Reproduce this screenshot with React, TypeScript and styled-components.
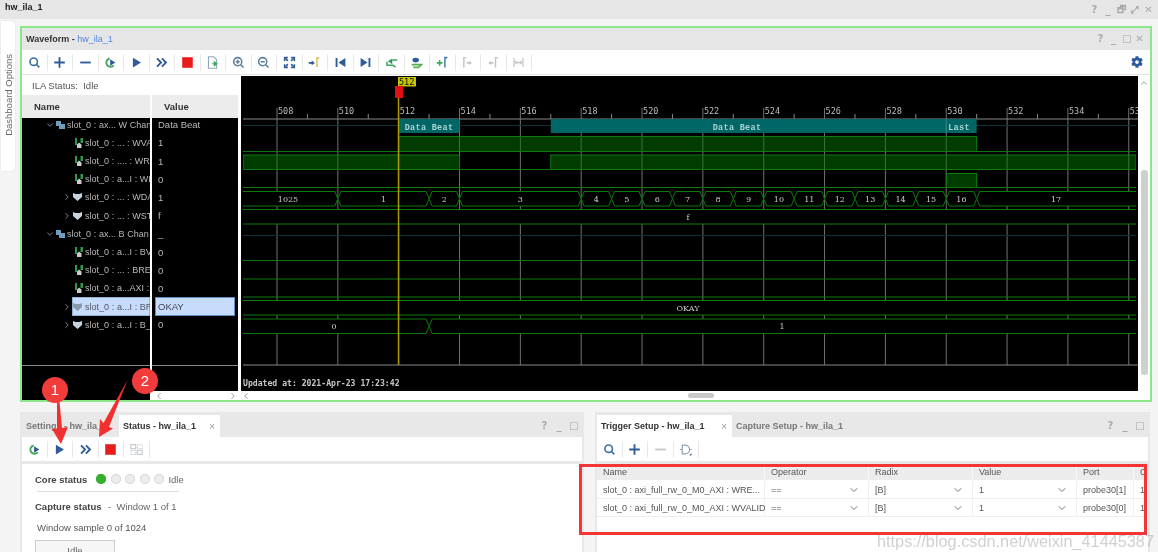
import React from 'react';
import styled, {createGlobalStyle} from 'styled-components';
import {FaCog} from 'react-icons/fa';
import {ChevronDown, ChevronLeft, ChevronRight, ChevronUp} from 'lucide-react';

const GlobalStyle = createGlobalStyle`
  html, body {
    margin: 0;
    padding: 0;
    background: #fff;
    font-family: "Liberation Sans", Arial, sans-serif;
    color: #444;
  }
`;

/* ---------- toolbar icons ---------- */

const BLUE = '#2f5c96';
const GREY = '#c4c8cc';

type IconName =
    'search' | 'plus' | 'minus' | 'refresh' | 'play' | 'fast' | 'stop' | 'export' | 'zoomIn' | 'zoomOut' | 'fit'
    | 'cursor' | 'first' | 'last' | 'addGreen' | 'addBlue' | 'addMark' | 'markNext' | 'markPrev' | 'span' | 'table'
    | 'minusOff' | 'gate';

const icons: Record<IconName, React.ReactNode> = {
    search: <g fill="none" stroke="#3d6fa5" strokeWidth="2"><circle cx="7" cy="7" r="4.6"/><path d="M10.500 10.500l3.500 3.500"/></g>,
    plus: <path d="M8 1.500v13M1.500 8h13" stroke={BLUE} strokeWidth="2.300"/>,
    minus: <path d="M1.500 8h13" stroke={BLUE} strokeWidth="2.300"/>,
    minusOff: <path d="M1.500 8h13" stroke={GREY} strokeWidth="2.300"/>,
    refresh: <g><path d="M12 11.500A5.200 5.200 0 1 1 7 3" fill="none" stroke="#4aa85a" strokeWidth="2.400"/><path d="M7.500 4l6.500 4-6.500 4z" fill={BLUE}/></g>,
    play: <path d="M3.500 2l10 6-10 6z" fill={BLUE}/>,
    fast: <path d="M2.500 3l5 5-5 5M8.500 3l5 5-5 5" fill="none" stroke={BLUE} strokeWidth="2.300"/>,
    stop: <rect x="1.500" y="1.500" width="13" height="13" fill="#e81c1c"/>,
    export: <g><path d="M3 1h6.500l3.500 3.500V15H3z" fill="#fff" stroke="#8fa6bd" strokeWidth="1.300"/><path d="M7 9.500h5M10 6.500l4 3-4 3z" stroke="#3ba55a" fill="#3ba55a"/></g>,
    zoomIn: <g fill="none" stroke="#5c7f9e" strokeWidth="1.900"><circle cx="7" cy="7" r="5"/><path d="M10.800 10.800l3.400 3.400M4.500 7h5M7 4.500v5"/></g>,
    zoomOut: <g fill="none" stroke="#5c7f9e" strokeWidth="1.900"><circle cx="7" cy="7" r="5"/><path d="M10.800 10.800l3.400 3.400M4.500 7h5"/></g>,
    fit: <g fill="none" stroke={BLUE} strokeWidth="1.900"><path d="M2 6V2h4M10 2h4v4M14 10v4h-4M6 14H2v-4"/><path d="M3 3l3 3M13 3l-3 3M13 13l-3-3M3 13l3-3"/></g>,
    cursor: <g><path d="M1 8.500h5" stroke={BLUE} strokeWidth="2.300"/><path d="M4.500 5.500l4 3-4 3z" fill={BLUE}/><path d="M14 2.500h-3v11" fill="none" stroke="#dcc25a" strokeWidth="1.900"/></g>,
    first: <g fill={BLUE}><rect x="2" y="2.500" width="2.300" height="11"/><path d="M14 2.500v11L5.500 8z"/></g>,
    last: <g fill={BLUE}><rect x="11.700" y="2.500" width="2.300" height="11"/><path d="M2 2.500v11L10.500 8z"/></g>,
    addGreen: <g><path d="M9 3L3.500 6.500 9 10z" fill="#2f9a57"/><path d="M2.500 7v4.500h7l3.500 2M9 5h6" fill="none" stroke="#3aa860" strokeWidth="1.900"/></g>,
    addBlue: <g><ellipse cx="7" cy="5" rx="4" ry="3" fill={BLUE}/><path d="M2 10.500h12l-3.500 3.500H4" fill="none" stroke="#55b04c" strokeWidth="2.200"/></g>,
    addMark: <g><path d="M1 8.500h7M4.500 5v7" stroke="#3aa860" strokeWidth="2"/><path d="M14 2h-3v12" fill="none" stroke="#4a80b4" strokeWidth="1.900"/></g>,
    markNext: <g><path d="M6.500 2h-3v12" fill="none" stroke="#c0c4c8" strokeWidth="1.800"/><path d="M7 8.500h4" stroke="#c0c4c8" strokeWidth="2"/><path d="M10 6l3.500 2.500-3.500 2.500z" fill="#c0c4c8"/></g>,
    markPrev: <g><path d="M13.500 2h-3v12" fill="none" stroke="#c0c4c8" strokeWidth="1.800"/><path d="M4 8.500h4" stroke="#c0c4c8" strokeWidth="2"/><path d="M5 6L1.500 8.500 5 11z" fill="#c0c4c8"/></g>,
    span: <g fill="none" stroke="#c6cacd" strokeWidth="1.600"><path d="M2.500 2.500v11M13.500 2.500v11M4 8h8M6 6L4 8l2 2M10 6l2 2-2 2"/></g>,
    table: <g fill="none" stroke="#c6cacd" strokeWidth="1.400"><rect x="1" y="2" width="6" height="5"/><rect x="9" y="9" width="6" height="5"/><rect x="1" y="9" width="6" height="5" strokeDasharray="1 1"/><rect x="9" y="2" width="6" height="5" strokeDasharray="1 1"/></g>,
    gate: <g fill="none" stroke="#8ea3b8" strokeWidth="1.500"><path d="M4 2.500h3.500a5.500 5.500 0 0 1 0 11H4zM1 8h3M13 8h2.500"/><path d="M13 15l2-2v2z" fill="#556" stroke="#556" strokeWidth=".5"/></g>,
};

const ToolIcon: React.FC<{name: IconName}> = ({name}) => (
    <svg width="13" height="13" viewBox="0 0 16 16">{icons[name]}</svg>
);

/* ---------- waveform chart ---------- */

const tx = (n: number) => 277 + (n - 508) * 30.42;
const LEFT = 243;
const RIGHT = 1136;
const LINE = '#0c7a0c';
const ticks = Array.from({length: 15}, (_, i) => 508 + i * 2);
const minors = Array.from({length: 15}, (_, i) => 509 + i * 2);

const busValues: [string, number, number, number?][] = [
    ['1025', 506, 510, 288], ['1', 510, 513], ['2', 513, 514], ['3', 514, 518], ['4', 518, 519], ['5', 519, 520],
    ['6', 520, 521], ['7', 521, 522], ['8', 522, 523], ['9', 523, 524], ['10', 524, 525], ['11', 525, 526],
    ['12', 526, 527], ['13', 527, 528], ['14', 528, 529], ['15', 529, 530], ['16', 530, 531], ['17', 531, 540, 1056],
];

const Digital: React.FC<{hi: number; lo: number; highs?: [number, number][]}> = ({hi, lo, highs = []}) => (
    <g>
        <path d={`M${LEFT} ${lo}H${RIGHT}`} stroke={LINE} fill="none"/>
        {highs.map(([a, b]) => (
            <rect key={a} x={a} y={hi} width={b - a} height={lo - hi} fill="rgba(0,120,0,.5)" stroke={LINE}/>
        ))}
    </g>
);

const BusSegment: React.FC<{x0: number; x1: number; top: number; bottom: number; label: string; labelX?: number}> = (
    {x0, x1, top, bottom, label, labelX}
) => {
    const mid = (top + bottom) / 2;
    const n = 3;
    return (
        <g>
            <path
                d={`M${x0} ${mid}L${x0 + n} ${top}H${x1 - n}L${x1} ${mid}L${x1 - n} ${bottom}H${x0 + n}Z`}
                fill="#000"
                stroke={LINE}
            />
            <WaveLabel x={labelX ?? (Math.max(x0, LEFT) + x1) / 2} y={mid + 3} textAnchor="middle">{label}</WaveLabel>
        </g>
    );
};

const WaveChart: React.FC = () => (
    <WaveSvg viewBox="241 76 897 315" width="897" height="315">
        <rect x="241" y="76" width="897" height="315" fill="#000"/>
        {ticks.map(n => (
            <g key={n}>
                <path d={`M${tx(n)} 108V365`} stroke="#707070"/>
                <RulerLabel x={tx(n) + 1} y={114}>{n}</RulerLabel>
            </g>
        ))}
        {minors.map(n => <path key={n} d={`M${tx(n)} 114V119`} stroke="#888"/>)}
        <path d={`M${LEFT} 119H1138M${LEFT} 365H1138`} stroke="#888"/>

        <path d={`M${LEFT} 125.500H${RIGHT}M${LEFT} 235.500H${RIGHT}`} stroke="#0d3238"/>
        <TealBar x={tx(512)} y={119} width={tx(514) - tx(512)} height={14}/>
        <TealBar x={tx(517)} y={119} width={tx(531) - tx(517)} height={14}/>
        <path d={`M${tx(530)} 119V133`} stroke="#3a8a8a"/>
        <TealLabel x={429} y={129.500} textAnchor="middle">Data Beat</TealLabel>
        <TealLabel x={737} y={129.500} textAnchor="middle">Data Beat</TealLabel>
        <TealLabel x={959} y={129.500} textAnchor="middle">Last</TealLabel>

        <Digital hi={136.500} lo={151.500} highs={[[tx(512), tx(531)]]}/>
        <Digital hi={155} lo={169.500} highs={[[LEFT, tx(514)], [tx(517), RIGHT]]}/>
        <Digital hi={173.500} lo={187.500} highs={[[tx(530), tx(531)]]}/>

        {busValues.map(([label, a, b, labelX]) => (
            <BusSegment key={label} x0={tx(a)} x1={tx(b)} top={191.500} bottom={206} label={label} labelX={labelX}/>
        ))}
        <BusSegment x0={tx(500)} x1={tx(550)} top={209.500} bottom={224} label="f" labelX={688}/>
        <Digital hi={250} lo={260.500}/>
        <Digital hi={270} lo={279}/>
        <Digital hi={288} lo={297}/>
        <BusSegment x0={tx(500)} x1={tx(550)} top={300.500} bottom={315} label="OKAY" labelX={688}/>
        <BusSegment x0={tx(500)} x1={tx(513)} top={319} bottom={333.500} label="0" labelX={334}/>
        <BusSegment x0={tx(513)} x1={tx(550)} top={319} bottom={333.500} label="1" labelX={782}/>

        <rect x="241" y="76" width="2" height="290" fill="#000"/>
        <rect x="1136" y="120" width="2" height="244" fill="#000"/>
        <path d="M398.500 86V365" stroke="#a89a00" strokeWidth="1.500"/>
        <rect x="398" y="77" width="18" height="9.500" fill="#c4c400"/>
        <MarkerLabel x={399} y={85}>512</MarkerLabel>
        <rect x="395" y="86" width="8" height="12" fill="#e01010"/>
        <UpdatedLabel x={243} y={386}>Updated at: 2021-Apr-23 17:23:42</UpdatedLabel>
    </WaveSvg>
);

/* ---------- tree ---------- */

type RowKind = 'group' | 'leaf' | 'bus';

interface SignalRow {
    kind: RowKind
    name: string
    value: string
    selected?: boolean
}

const rows: SignalRow[] = [
    {kind: 'group', name: 'slot_0 : ax... W Chan', value: 'Data Beat'},
    {kind: 'leaf', name: 'slot_0 : ... : WVA', value: '1'},
    {kind: 'leaf', name: 'slot_0 : .... : WRE', value: '1'},
    {kind: 'leaf', name: 'slot_0 : a...I : WL', value: '0'},
    {kind: 'bus', name: 'slot_0 : ... : WDA', value: '1'},
    {kind: 'bus', name: 'slot_0 : ... : WST', value: 'f'},
    {kind: 'group', name: 'slot_0 : ax... B Chan', value: '_'},
    {kind: 'leaf', name: 'slot_0 : a...I : BV', value: '0'},
    {kind: 'leaf', name: 'slot_0 : ... : BRE', value: '0'},
    {kind: 'leaf', name: 'slot_0 : a...AXI : I', value: '0'},
    {kind: 'bus', name: 'slot_0 : a...I : BR', value: 'OKAY', selected: true},
    {kind: 'bus', name: 'slot_0 : a...I : B_', value: '0'},
];

const RowIcon: React.FC<{kind: RowKind; selected?: boolean}> = ({kind, selected}) => {
    if (kind === 'group') {
        return (
            <RowGlyph width="9" height="9" viewBox="0 0 9 9">
                <path d="M0 1h5v3h4v5H3V6H0z" fill="#6f9fc0"/>
            </RowGlyph>
        );
    }
    if (kind === 'leaf') {
        return (
            <RowGlyph width="8" height="10" viewBox="0 0 8 10">
                <path d="M0 0h2v7H0zM5.500 0H8v5H5.500z" fill="#2f9a4f"/>
                <path d="M2 10V6.500l2-2 2.500 2V10z" fill="#ccc"/>
            </RowGlyph>
        );
    }
    return (
        <RowGlyph width="9" height="8" viewBox="0 0 9 8">
            <path d="M0 0l2.500 1h4L9 0v4L4.500 8 0 4z" fill={selected ? '#8a9aa8' : '#c6d4e0'}/>
        </RowGlyph>
    );
};

/* ---------- page ---------- */

const waveTools: IconName[] = [
    'search', 'plus', 'minus', 'refresh', 'play', 'fast', 'stop', 'export', 'zoomIn', 'zoomOut', 'fit', 'cursor',
    'first', 'last', 'addGreen', 'addBlue', 'addMark', 'markNext', 'markPrev', 'span',
];

const tableRows = [
    ['slot_0 : axi_full_rw_0_M0_AXI : WRE...', 'probe30[1]'],
    ['slot_0 : axi_full_rw_0_M0_AXI : WVALID', 'probe30[0]'],
];

const App: React.FC = () => (
    <>
        <GlobalStyle/>
        <Page>
            <TopBar>
                <TopTitle>hw_ila_1</TopTitle>
                <WindowButtons $gap={4.5}>
                    <WinGlyph>?</WinGlyph><WinGlyph>_</WinGlyph><WinGlyph>🗗</WinGlyph><WinGlyph>⤢</WinGlyph><WinGlyph>✕</WinGlyph>
                </WindowButtons>
            </TopBar>

            <Workspace>
                <SideTab><SideTabText>Dashboard Options</SideTabText></SideTab>
                <Frame>
                    <FrameHeader>
                        <FrameTitle>Waveform - <FrameLink>hw_ila_1</FrameLink></FrameTitle>
                        <WindowButtons $gap={4}>
                            <WinGlyph>?</WinGlyph><WinGlyph>_</WinGlyph><WinGlyph>□</WinGlyph><WinGlyph>✕</WinGlyph>
                        </WindowButtons>
                    </FrameHeader>
                    <Toolbar>
                        {waveTools.map((name, i) => <ToolButton key={i}><ToolIcon name={name}/></ToolButton>)}
                        <GearSlot><FaCog size={12} color="#2c5aa0"/></GearSlot>
                    </Toolbar>
                    <FrameBody>
                        <SignalPanel>
                            <IlaStatus>ILA Status:&nbsp; Idle</IlaStatus>
                            <Columns>
                                <NameColumn>
                                    <ColumnHeader $indent={12}>Name</ColumnHeader>
                                    <ColumnList>
                                        <RowStack>
                                            {rows.map(row => (
                                                <NameRow key={row.name} $kind={row.kind}>
                                                    <Twist>
                                                        {row.kind === 'group' && <ChevronDown size={10}/>}
                                                        {row.kind === 'bus' && <ChevronRight size={10}/>}
                                                    </Twist>
                                                    <NameCell $selected={row.selected} $kind={row.kind}>
                                                        <RowIcon kind={row.kind} selected={row.selected}/>
                                                        <NameText>{row.name}</NameText>
                                                    </NameCell>
                                                </NameRow>
                                            ))}
                                        </RowStack>
                                    </ColumnList>
                                    <ColumnFoot/>
                                </NameColumn>
                                <ValueColumn>
                                    <ColumnHeader $indent={12}>Value</ColumnHeader>
                                    <ColumnList>
                                        <RowStack>
                                            {rows.map(row => (
                                                <ValueRow key={row.name} $selected={row.selected}>{row.value}</ValueRow>
                                            ))}
                                        </RowStack>
                                    </ColumnList>
                                    <ColumnFoot/>
                                    <HScroll $narrow>
                                        <ChevronLeft size={10}/>
                                        <ChevronRight size={10}/>
                                    </HScroll>
                                </ValueColumn>
                            </Columns>
                        </SignalPanel>
                        <WavePane>
                            <WaveChart/>
                            <HScroll>
                                <ChevronLeft size={10}/>
                                <HThumb/>
                                <span/>
                            </HScroll>
                        </WavePane>
                        <VScroll>
                            <ChevronUp size={10}/>
                            <VThumb/>
                        </VScroll>
                    </FrameBody>
                </Frame>
            </Workspace>

            <BottomRow>
                <StatusPanel>
                    <TabBar>
                        <Tab $width={97}>Settings - hw_ila_1</Tab>
                        <Tab $active $width={101}>Status - hw_ila_1<TabClose>×</TabClose></Tab>
                        <PanelButtons><WinGlyph>?</WinGlyph><WinGlyph>_</WinGlyph><WinGlyph>□</WinGlyph></PanelButtons>
                    </TabBar>
                    <PanelToolbar>
                        {(['refresh', 'play', 'fast', 'stop', 'table'] as IconName[]).map(name => (
                            <ToolButton key={name}><ToolIcon name={name}/></ToolButton>
                        ))}
                    </PanelToolbar>
                    <StatusBody>
                        <CoreLine>
                            <StatusLabel>Core status</StatusLabel>
                            <Dots>
                                <Dot $on/><Dot/><Dot/><Dot/><Dot/>
                            </Dots>
                            <StatusText>Idle</StatusText>
                        </CoreLine>
                        <StatusRule/>
                        <CaptureLine>
                            <StatusLabel>Capture status</StatusLabel>
                            <StatusText>-&nbsp; Window 1 of 1</StatusText>
                        </CaptureLine>
                        <SampleLine>Window sample 0 of 1024</SampleLine>
                        <IdleBox>Idle</IdleBox>
                    </StatusBody>
                </StatusPanel>

                <TriggerPanel>
                    <TabBar>
                        <Tab $active $width={135}>Trigger Setup - hw_ila_1<TabClose>×</TabClose></Tab>
                        <Tab>Capture Setup - hw_ila_1</Tab>
                        <PanelButtons><WinGlyph>?</WinGlyph><WinGlyph>_</WinGlyph><WinGlyph>□</WinGlyph></PanelButtons>
                    </TabBar>
                    <PanelToolbar>
                        {(['search', 'plus', 'minusOff', 'gate'] as IconName[]).map(name => (
                            <ToolButton key={name}><ToolIcon name={name}/></ToolButton>
                        ))}
                    </PanelToolbar>
                    <TriggerTable>
                        <HeadCell>Name</HeadCell>
                        <HeadCell>Operator</HeadCell>
                        <HeadCell>Radix</HeadCell>
                        <HeadCell>Value</HeadCell>
                        <HeadCell>Port</HeadCell>
                        <HeadCell>C</HeadCell>
                        {tableRows.map(([name, port]) => (
                            <React.Fragment key={port}>
                                <BodyCell>{name}</BodyCell>
                                <BodyCell>==<ChevronDown size={12}/></BodyCell>
                                <BodyCell>[B]<ChevronDown size={12}/></BodyCell>
                                <BodyCell>1<ChevronDown size={12}/></BodyCell>
                                <BodyCell>{port}</BodyCell>
                                <BodyCell>1</BodyCell>
                            </React.Fragment>
                        ))}
                    </TriggerTable>
                </TriggerPanel>
            </BottomRow>

            <Annotations viewBox="0 0 1158 552" width="1158" height="552">
                <path d="M57 402L59.500 402L62 428L68 427L61 444L52 429L57 428.500Z" fill="#f23030"/>
                <path d="M127.500 380L109 427L113 428.500L99 437L100 419L103.500 423Z" fill="#f23030"/>
                <circle cx="55" cy="390" r="13" fill="#f23c3c"/>
                <circle cx="145" cy="381" r="13" fill="#f23c3c"/>
                <AnnotationNumber x={55} y={395} textAnchor="middle">1</AnnotationNumber>
                <AnnotationNumber x={145} y={386} textAnchor="middle">2</AnnotationNumber>
            </Annotations>
            <RedBox/>
            <Watermark>https://blog.csdn.net/weixin_41445387</Watermark>
        </Page>
    </>
);

const Page = styled.div`
  position: relative;
  width: 1158px;
  height: 552px;
  overflow: hidden;
  background: #f4f4f4;
  filter: blur(0.45px);
`;

const TopBar = styled.div`
  height: 19px;
  display: flex;
  align-items: center;
  justify-content: space-between;
  padding: 0 5px;
  background: #e6e6e6;
`;

const TopTitle = styled.div`
  align-self: flex-start;
  padding-top: 2px;
  font-size: 9px;
  font-weight: bold;
  color: #222;
`;

const WindowButtons = styled.div<{$gap: number}>`
  display: flex;
  align-items: center;
  gap: ${p => p.$gap}px;
`;

const WinGlyph = styled.span`
  width: 9px;
  text-align: center;
  font-size: 10px;
  line-height: 12px;
  font-weight: bold;
  color: #aaa;
  font-family: "DejaVu Sans", sans-serif;
`;

const Workspace = styled.div`
  display: flex;
  align-items: flex-start;
  padding-top: 2px;
  height: 383px;
  box-sizing: border-box;
`;

const SideTab = styled.div`
  width: 14px;
  height: 150px;
  margin: 0 5px 0 1px;
  background: #fff;
  border-radius: 0 3px 3px 0;
  box-shadow: 0 0 1px #bbb;
  display: flex;
  justify-content: center;
  align-items: center;
`;

const SideTabText = styled.div`
  writing-mode: vertical-rl;
  transform: rotate(180deg);
  font-size: 9.5px;
  color: #666;
  white-space: nowrap;
  padding-top: 2px;
  align-self: center;
`;

const Frame = styled.div`
  margin-top: 5px;
  width: 1132px;
  height: 376px;
  box-sizing: border-box;
  border: 2px solid #8ae88a;
  background: #fff;
  display: flex;
  flex-direction: column;
`;

const FrameHeader = styled.div`
  height: 22px;
  display: flex;
  align-items: center;
  justify-content: space-between;
  padding: 0 6px 0 4px;
  background: #e6e6e6;
  flex: none;
`;

const FrameTitle = styled.div`
  font-size: 9px;
  font-weight: bold;
  color: #333;
`;

const FrameLink = styled.span`
  color: #4f87e0;
  font-weight: normal;
`;

const Toolbar = styled.div`
  height: 25px;
  flex: none;
  display: flex;
  align-items: center;
  border-bottom: 1px solid #e4e4e4;
  box-sizing: border-box;
`;

const ToolButton = styled.div`
  width: 25.5px;
  height: 17px;
  flex: none;
  display: flex;
  align-items: center;
  justify-content: center;
  border-right: 1px solid #e8e8e8;
  box-sizing: border-box;
`;

const GearSlot = styled.div`
  margin-left: auto;
  margin-right: 7px;
  display: flex;
`;

const FrameBody = styled.div`
  flex: 1;
  min-height: 0;
  display: flex;
`;

const SignalPanel = styled.div`
  width: 219px;
  flex: none;
  display: flex;
  flex-direction: column;
`;

const IlaStatus = styled.div`
  height: 17px;
  margin: 2px 3px 1px 1px;
  padding-left: 9px;
  display: flex;
  align-items: center;
  flex: none;
  font-size: 9.5px;
  color: #555;
`;

const Columns = styled.div`
  flex: 1;
  min-height: 0;
  display: flex;
  gap: 2px;
  padding-right: 1px;
`;

const NameColumn = styled.div`
  width: 128px;
  flex: none;
  display: flex;
  flex-direction: column;
`;

const ValueColumn = styled.div`
  width: 86px;
  flex: none;
  display: flex;
  flex-direction: column;
`;

const ColumnHeader = styled.div<{$indent: number}>`
  height: 23px;
  flex: none;
  display: flex;
  align-items: center;
  padding-left: ${p => p.$indent}px;
  background: #ececec;
  font-size: 9.5px;
  font-weight: bold;
  color: #333;
`;

const ColumnList = styled.div`
  height: 247px;
  flex: none;
  background: #000;
  overflow: hidden;
`;

const RowStack = styled.div`
  margin-top: -2.4px;
`;

const NameRow = styled.div<{$kind: RowKind}>`
  height: 18.2px;
  display: flex;
  align-items: center;
  padding-left: ${p => (p.$kind === 'group' ? 23 : 40)}px;
`;

const Twist = styled.span`
  width: 10px;
  flex: none;
  display: flex;
  color: #999;
`;

const NameCell = styled.div<{$selected?: boolean; $kind: RowKind}>`
  flex: 1;
  height: 100%;
  min-width: 0;
  display: flex;
  align-items: center;
  gap: ${p => (p.$kind === 'bus' ? 3 : 2)}px;
  padding-left: ${p => (p.$kind === 'leaf' ? 2 : 1)}px;
  margin-left: ${p => (p.$kind === 'leaf' ? 1 : 0)}px;
  box-sizing: border-box;
  overflow: hidden;
  color: ${p => (p.$selected ? '#556' : '#b8b8b8')};
  background: ${p => (p.$selected ? '#c6dcfa' : 'transparent')};
  ${p => p.$selected && 'box-shadow: inset 0 0 0 1px #8fb2d8;'}
`;

const RowGlyph = styled.svg`
  flex: none;
`;

const NameText = styled.span`
  font-size: 9px;
  word-spacing: 0.2px;
  white-space: nowrap;
`;

const ValueRow = styled.div<{$selected?: boolean}>`
  height: 18.2px;
  margin-left: 3px;
  margin-right: 3px;
  display: flex;
  align-items: center;
  padding-left: 3px;
  box-sizing: border-box;
  font-size: 9.5px;
  white-space: nowrap;
  color: ${p => (p.$selected ? '#445' : '#b8b8b8')};
  background: ${p => (p.$selected ? '#c6dcfa' : 'transparent')};
  ${p => p.$selected && 'box-shadow: inset 0 0 0 1px #5f8fbf;'}
`;

const ColumnFoot = styled.div`
  flex: 1;
  background: #000;
  border-top: 1px solid #888;
`;

const HScroll = styled.div<{$narrow?: boolean}>`
  height: 9px;
  flex: none;
  display: flex;
  align-items: center;
  justify-content: space-between;
  padding-left: ${p => (p.$narrow ? 2 : 0)}px;
  color: #888;
  background: #fff;
`;

const HThumb = styled.div`
  width: 26px;
  height: 5px;
  margin-left: 12px;
  background: #c8c8c8;
  border-radius: 3px;
`;

const WavePane = styled.div`
  width: 897px;
  padding-top: 1px;
  flex: none;
  display: flex;
  flex-direction: column;
`;

const WaveSvg = styled.svg`
  display: block;
  flex: none;
`;

const VScroll = styled.div`
  flex: 1;
  display: flex;
  flex-direction: column;
  align-items: center;
  padding-top: 3px;
  color: #888;
`;

const VThumb = styled.div`
  margin-top: 82px;
  width: 7px;
  height: 205px;
  background: #cfcfcf;
  border-radius: 3px;
`;

const RulerLabel = styled.text`
  font-family: "DejaVu Sans Mono", monospace;
  font-size: 8.5px;
  fill: #bbb;
`;

const WaveLabel = styled.text`
  font-family: "DejaVu Serif", serif;
  font-size: 8px;
  fill: #ccc;
`;

const TealBar = styled.rect`
  fill: #006766;
`;

const TealLabel = styled.text`
  font-family: "Liberation Mono", monospace;
  font-size: 8.5px;
  font-weight: bold;
  fill: #a8d4d4;
  letter-spacing: 0.3px;
`;

const MarkerLabel = styled.text`
  font-family: "DejaVu Sans Mono", monospace;
  font-size: 8.5px;
  fill: #111;
`;

const UpdatedLabel = styled.text`
  font-family: "DejaVu Sans Mono", monospace;
  font-size: 8.15px;
  font-weight: bold;
  fill: #c8c8c8;
`;

const BottomRow = styled.div`
  display: flex;
  gap: 11px;
  padding: 10px 8px 0 20px;
`;

const StatusPanel = styled.div`
  width: 564px;
  flex: none;
  height: 140px;
  box-sizing: border-box;
  border: solid #e8e8e8;
  border-width: 0 2px;
  background: #fff;
  overflow: hidden;
`;

const TriggerPanel = styled.div`
  flex: 1;
  height: 140px;
  box-sizing: border-box;
  border: solid #e8e8e8;
  border-width: 0 2px;
  background: #fff;
  overflow: hidden;
`;

const TabBar = styled.div`
  height: 25px;
  box-sizing: border-box;
  padding-top: 3px;
  display: flex;
  align-items: stretch;
  background: #e8e8e8;
`;

const Tab = styled.div<{$active?: boolean; $width?: number}>`
  display: flex;
  align-items: center;
  padding: 0 5px 0 4px;
  box-sizing: border-box;
  font-size: 9px;
  font-weight: bold;
  white-space: nowrap;
  color: ${p => (p.$active ? '#333' : '#777')};
  background: ${p => (p.$active ? '#fff' : 'transparent')};
  ${p => p.$width && `width: ${p.$width}px;`}
`;

const TabClose = styled.span`
  margin-left: auto;
  font-weight: normal;
  font-size: 10px;
  color: #999;
`;

const PanelButtons = styled.div`
  margin-left: auto;
  display: flex;
  align-items: center;
  gap: 5.5px;
  padding-right: 4px;
`;

const PanelToolbar = styled.div`
  height: 27px;
  box-sizing: border-box;
  display: flex;
  align-items: center;
  border-bottom: 3px solid #e8e8e8;
`;

const StatusBody = styled.div`
  padding: 8px 0 0 13px;
  font-size: 9.5px;
`;

const CoreLine = styled.div`
  display: flex;
  align-items: center;
  height: 14px;
`;

const StatusLabel = styled.span`
  font-weight: bold;
  color: #444;
  width: 56px;
  white-space: nowrap;
`;

const Dots = styled.div`
  display: flex;
  gap: 4.6px;
  margin: 0 4px 0 5px;
`;

const Dot = styled.span<{$on?: boolean}>`
  width: 10px;
  height: 10px;
  border-radius: 50%;
  background: ${p => (p.$on ? '#35b030' : '#ececec')};
  box-shadow: inset 0 0 0 1px ${p => (p.$on ? '#35b030' : '#d8d8d8')};
`;

const StatusText = styled.span`
  color: #666;
  white-space: nowrap;
`;

const StatusRule = styled.div`
  width: 142px;
  height: 1px;
  margin: 5px 0 0 2px;
  background: #ddd;
`;

const CaptureLine = styled.div`
  display: flex;
  gap: 17px;
  margin-top: 7px;
  height: 14px;
  align-items: center;
`;

const SampleLine = styled.div`
  margin: 9px 0 0 2px;
  color: #555;
`;

const IdleBox = styled.div`
  width: 80px;
  height: 22px;
  margin-top: 7px;
  box-sizing: border-box;
  border: 1px solid #ccc;
  background: #f6f6f6;
  text-align: center;
  padding-top: 4px;
  color: #666;
`;

const TriggerTable = styled.div`
  display: grid;
  grid-template-columns: 168px 104px 104px 104px 57px 1fr;
  grid-template-rows: 17px 18px 18px;
  font-size: 9px;
  color: #555;
`;

const HeadCell = styled.div`
  height: 16px;
  display: flex;
  align-items: center;
  padding-left: 6px;
  background: #ececec;
  border-right: 1px solid #f8f8f8;
  overflow: hidden;
`;

const BodyCell = styled.div`
  display: flex;
  align-items: center;
  justify-content: space-between;
  padding: 0 8px 0 6px;
  border-right: 1px solid #f0f0f0;
  border-bottom: 1px solid #eee;
  white-space: nowrap;
  svg {
    color: #777;
    flex: none;
  }
`;

const Annotations = styled.svg`
  position: absolute;
  left: 0;
  top: 0;
  pointer-events: none;
`;

const AnnotationNumber = styled.text`
  font-family: "Liberation Sans", sans-serif;
  font-size: 15px;
  fill: #fff;
`;

const RedBox = styled.div`
  position: absolute;
  left: 579px;
  top: 464px;
  width: 568px;
  height: 71px;
  box-sizing: border-box;
  border: 3px solid #f53535;
`;

const Watermark = styled.div`
  position: absolute;
  left: 877px;
  top: 532px;
  font-size: 16.3px;
  white-space: nowrap;
  color: rgba(170, 170, 170, 0.55);
`;

export default App;
